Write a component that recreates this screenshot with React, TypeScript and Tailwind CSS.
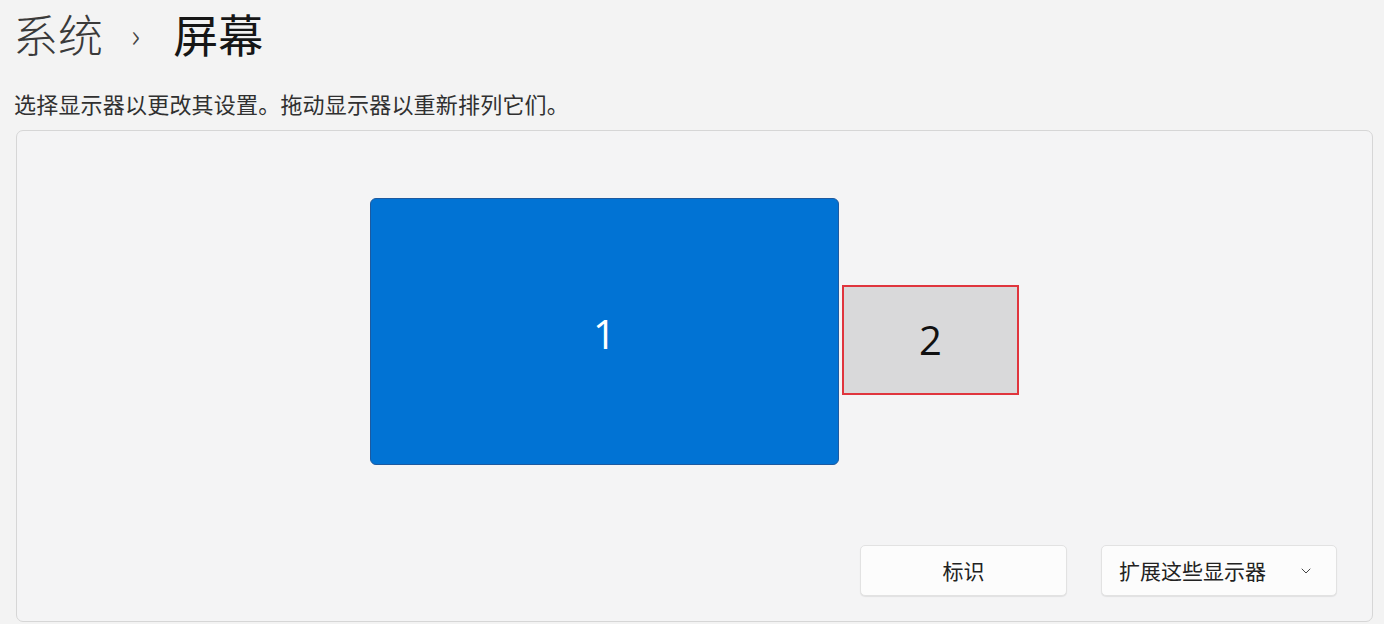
import { ChevronDown } from "lucide-react";

const cjk = { fontFamily: '"Noto Sans CJK SC", "Noto Sans", sans-serif' };

export default function App() {
    return (
        <div
            className="w-[1384px] h-[624px] overflow-hidden bg-[#f3f3f3] text-[#1b1b1b]"
            style={cjk}
        >
            <div className="flex items-center h-[64px] pl-[13px] pt-[2px]">
                <span className="text-[45px] leading-none font-light text-[#3a3a3a]">
                    系统
                </span>
                <span className="ml-[28px] mr-[33px] text-[32px] leading-none text-[#444] font-light">
                    ›
                </span>
                <span className="text-[45px] leading-none font-normal text-[#161616]">
                    屏幕
                </span>
            </div>
            <div className="pl-[14px] pt-[25px] text-[22px] tracking-[0.2px] leading-[28px] text-[#303030]">
                选择显示器以更改其设置。拖动显示器以重新排列它们。
            </div>
            <div className="ml-[16px] mt-[13px] w-[1357px] h-[492px] rounded-[7px] border border-[#d6d6d6] bg-[#f4f4f5] flex flex-col">
                <div className="flex items-start pl-[353px] pt-[67px]">
                    <div className="w-[469px] h-[267px] rounded-[6px] border border-[#1d5aa0] bg-[#0173d4] flex items-center justify-center">
                        <span
                            className="text-[40px] text-white mt-[4px]"
                            style={{ fontFamily: '"Segoe UI", "Open Sans", sans-serif' }}
                        >
                            1
                        </span>
                    </div>
                    <div className="ml-[3px] mt-[87px] w-[177px] h-[110px] border-2 border-[#e0353d] bg-[#d9d9da] flex items-center justify-center">
                        <span
                            className="text-[40px] text-[#111]"
                            style={{ fontFamily: '"Segoe UI", "Open Sans", sans-serif' }}
                        >
                            2
                        </span>
                    </div>
                </div>
                <div className="mt-auto mb-[25px] flex justify-end gap-[34px] pr-[35px]">
                    <button className="w-[207px] h-[51px] rounded-[5px] border border-[#e2e2e2] bg-[#fcfcfc] shadow-[0_1px_1px_rgba(0,0,0,0.08)] text-[21px] text-[#222]">
                        标识
                    </button>
                    <button className="w-[236px] h-[51px] rounded-[5px] border border-[#e2e2e2] bg-[#fcfcfc] shadow-[0_1px_1px_rgba(0,0,0,0.08)] text-[21px] text-[#222] flex items-center pl-[17px] pr-[22px]">
                        <span>扩展这些显示器</span>
                        <ChevronDown className="ml-auto w-[16px] h-[16px] text-[#444]" strokeWidth={1.5} />
                    </button>
                </div>
            </div>
        </div>
    );
}
